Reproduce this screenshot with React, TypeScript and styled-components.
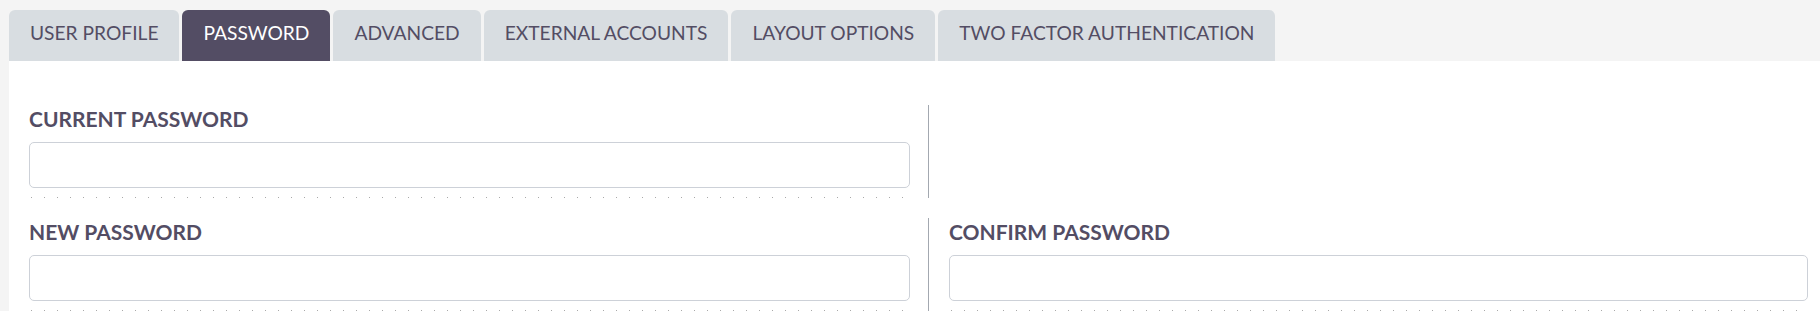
import * as React from 'react';
import styled, { createGlobalStyle } from 'styled-components';

const GlobalStyle = createGlobalStyle`
  html, body{
    margin: 0;
    padding: 0;
    background: #f4f4f4;
    font-family: Lato, "Open Sans", sans-serif;
  }
`;

const StyledPage = styled.div`
  padding: 10px 0 0 9px;
  min-height: 311px;
  box-sizing: border-box;
  display: flex;
  flex-direction: column;
`;

const StyledTabs = styled.ul`
  display: flex;
  gap: 3px;
  margin: 0;
  padding: 0;
  list-style: none;
`;

const StyledTab = styled.li<{ $active?: boolean }>`
  height: 51px;
  padding: 0 21px 6px;
  display: flex;
  align-items: center;
  box-sizing: border-box;
  border-radius: 6px 6px 0 0;
  background: ${p => (p.$active ? '#534d64' : '#d8dde1')};
  color: ${p => (p.$active ? '#ffffff' : '#534d64')};
  font-size: 19.2px;
  text-transform: uppercase;
  white-space: nowrap;
  cursor: pointer;
`;

const StyledPanel = styled.div`
  flex: 1;
  background: #ffffff;
  padding-top: 44px;
  display: grid;
  grid-template-columns: 920px 1fr;
  row-gap: 20px;
  align-content: start;
`;

const StyledCell = styled.div<{ $divider?: boolean }>`
  height: 93px;
  box-sizing: border-box;
  padding: ${p => (p.$divider ? '0 18px 0 20px' : '0 12px 0 20px')};
  border-right: ${p => (p.$divider ? '1px solid #a3a8b0' : 'none')};
`;

const StyledField = styled.div`
  height: 93px;
  box-sizing: border-box;
  background-image: linear-gradient(to right, #a9a9a9 1px, transparent 1px);
  background-size: 13px 1px;
  background-repeat: repeat-x;
  background-position: 2px 92px;

  label{
    display: block;
    height: 37px;
    color: #534d64;
    font-size: 21px;
    font-weight: 700;
    line-height: 28px;
    text-transform: uppercase;
  }

  input{
    display: block;
    width: 100%;
    height: 46px;
    box-sizing: border-box;
    border: 1px solid #cdd1d8;
    border-radius: 5px;
    background: #ffffff;
    outline: none;
    font-family: inherit;
    font-size: 18px;
    padding: 0 12px;
  }
`;

const tabs = [
  'User Profile',
  'Password',
  'Advanced',
  'External Accounts',
  'Layout Options',
  'Two Factor Authentication'
];

const Field = (props: { label: string }) => (
  <StyledField>
    <label>{props.label}</label>
    <input type="password" />
  </StyledField>
);

const App = () => {
  return (
    <StyledPage>
      <GlobalStyle />
      <StyledTabs>
        {tabs.map(t => (
          <StyledTab key={t} $active={t === 'Password'}>{t}</StyledTab>
        ))}
      </StyledTabs>
      <StyledPanel>
        <StyledCell $divider>
          <Field label="Current Password" />
        </StyledCell>
        <StyledCell />
        <StyledCell $divider>
          <Field label="New Password" />
        </StyledCell>
        <StyledCell>
          <Field label="Confirm Password" />
        </StyledCell>
      </StyledPanel>
    </StyledPage>
  );
};

export default App;
